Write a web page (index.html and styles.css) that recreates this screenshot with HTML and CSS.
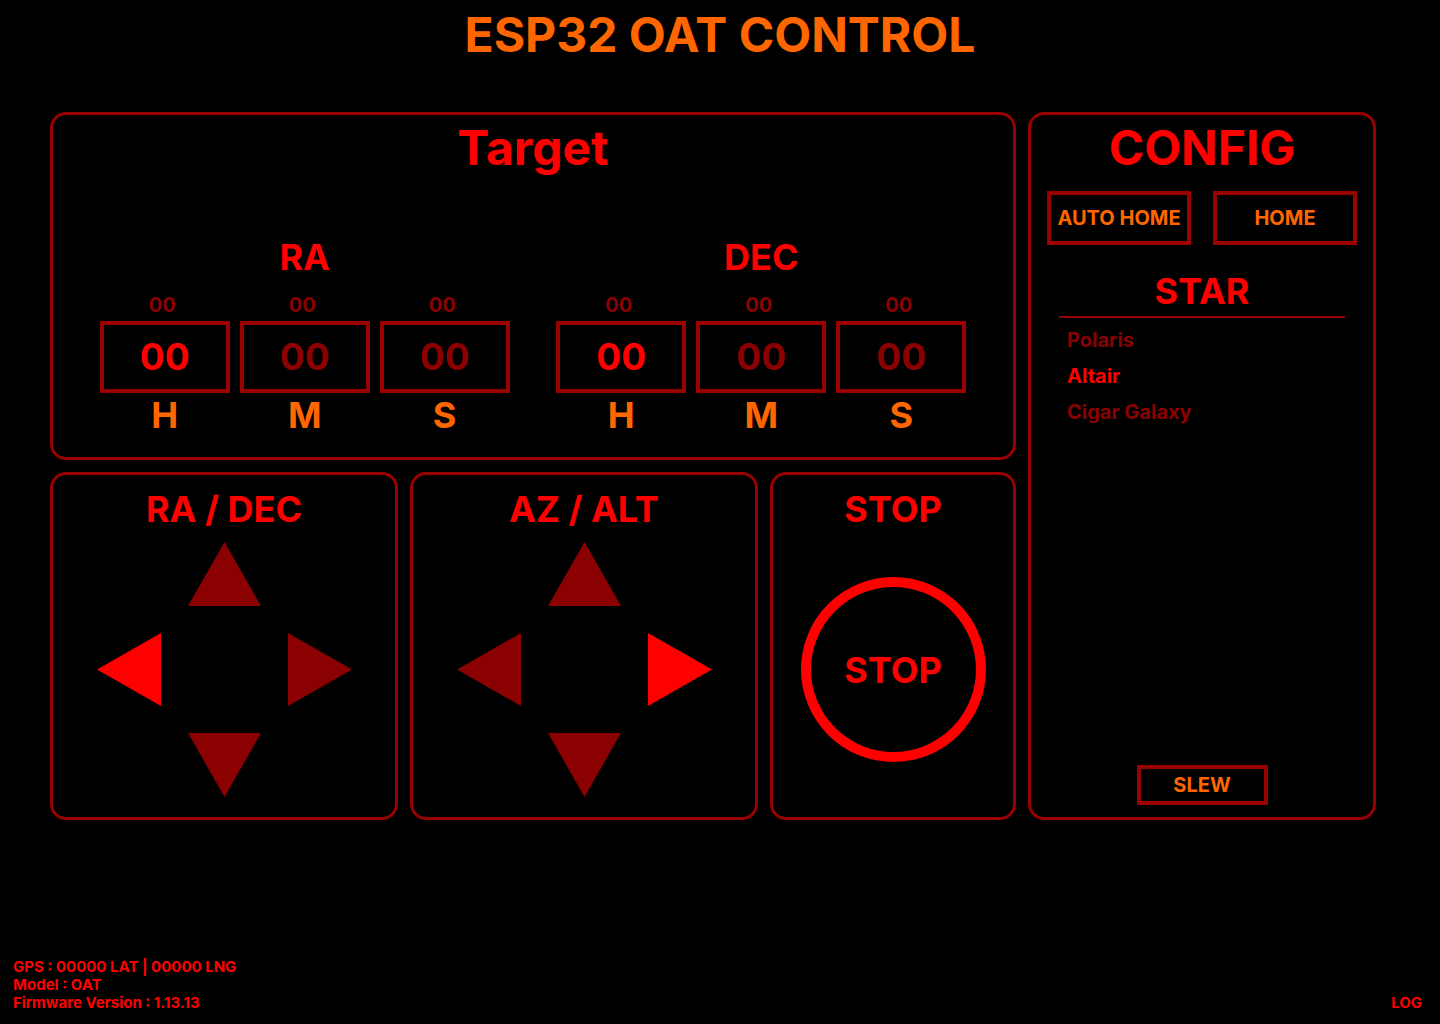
FILE: index.html
```html
<!DOCTYPE html>
<html lang="en">
<head>
<meta charset="utf-8">
<title>ESP32 OAT CONTROL</title>
<link rel="stylesheet" href="styles.css">
</head>
<body>
<header class="header">
  <h1 class="app-title">ESP32 OAT CONTROL</h1>
</header>
<main class="main">
  <div class="left-col">
    <section class="panel target">
      <h2 class="panel-title big">Target</h2>
      <div class="coords">
        <div class="coord-group">
          <div class="group-label">RA</div>
          <div class="fields">
            <div class="field"><div class="field-hint">00</div><div class="field-box active">00</div><div class="field-unit">H</div></div>
            <div class="field"><div class="field-hint">00</div><div class="field-box">00</div><div class="field-unit">M</div></div>
            <div class="field"><div class="field-hint">00</div><div class="field-box">00</div><div class="field-unit">S</div></div>
          </div>
        </div>
        <div class="coord-group">
          <div class="group-label">DEC</div>
          <div class="fields">
            <div class="field"><div class="field-hint">00</div><div class="field-box active">00</div><div class="field-unit">H</div></div>
            <div class="field"><div class="field-hint">00</div><div class="field-box">00</div><div class="field-unit">M</div></div>
            <div class="field"><div class="field-hint">00</div><div class="field-box">00</div><div class="field-unit">S</div></div>
          </div>
        </div>
      </div>
    </section>
    <div class="controls">
      <section class="panel pad-panel">
        <h2 class="panel-title">RA / DEC</h2>
        <div class="dpad">
          <svg class="arrow up" viewBox="0 0 73 64"><polygon points="36.5,0 73,64 0,64"/></svg>
          <svg class="arrow left on" viewBox="0 0 64 73"><polygon points="0,36.5 64,0 64,73"/></svg>
          <svg class="arrow right" viewBox="0 0 64 73"><polygon points="64,36.5 0,0 0,73"/></svg>
          <svg class="arrow down" viewBox="0 0 73 64"><polygon points="0,0 73,0 36.5,64"/></svg>
        </div>
      </section>
      <section class="panel pad-panel">
        <h2 class="panel-title">AZ / ALT</h2>
        <div class="dpad">
          <svg class="arrow up" viewBox="0 0 73 64"><polygon points="36.5,0 73,64 0,64"/></svg>
          <svg class="arrow left" viewBox="0 0 64 73"><polygon points="0,36.5 64,0 64,73"/></svg>
          <svg class="arrow right on" viewBox="0 0 64 73"><polygon points="64,36.5 0,0 0,73"/></svg>
          <svg class="arrow down" viewBox="0 0 73 64"><polygon points="0,0 73,0 36.5,64"/></svg>
        </div>
      </section>
      <section class="panel stop-panel">
        <h2 class="panel-title">STOP</h2>
        <div class="stop-btn">STOP</div>
      </section>
    </div>
  </div>
  <aside class="panel config">
    <h2 class="panel-title big">CONFIG</h2>
    <div class="config-buttons">
      <div class="btn">AUTO HOME</div>
      <div class="btn">HOME</div>
    </div>
    <h3 class="star-title">STAR</h3>
    <ul class="star-list">
      <li class="star">Polaris</li>
      <li class="star selected">Altair</li>
      <li class="star">Cigar Galaxy</li>
    </ul>
    <div class="btn slew">SLEW</div>
  </aside>
</main>
<footer class="footer">
  <div class="info">
    <div>GPS : 00000 LAT | 00000 LNG</div>
    <div>Model : OAT</div>
    <div>Firmware Version : 1.13.13</div>
  </div>
  <div class="log">LOG</div>
</footer>
</body>
</html>
```

FILE: styles.css
```css
* { box-sizing: border-box; }

html, body {
  margin: 0;
  padding: 0;
  background: #000;
}

body {
  width: 1440px;
  height: 1024px;
  display: flex;
  flex-direction: column;
  font-family: Inter, "Noto Sans", sans-serif;
  font-weight: 700;
  color: #ff0000;
  overflow: hidden;
}

.header {
  height: 64px;
  padding-top: 6px;
}

.app-title {
  margin: 0;
  text-align: center;
  font-size: 48px;
  line-height: 58px;
  font-weight: 700;
  color: #ff6600;
}

.main {
  margin-top: 48px;
  padding-left: 50px;
  display: flex;
  gap: 12px;
  height: 708px;
}

.left-col {
  width: 966px;
  display: flex;
  flex-direction: column;
  gap: 12px;
}

.panel {
  border: 3px solid #990000;
  border-radius: 16px;
  display: flex;
  flex-direction: column;
  align-items: center;
}

.panel-title {
  margin: 0;
  font-size: 36px;
  line-height: 44px;
  font-weight: 700;
  color: #ff0000;
  text-align: center;
}

.panel-title.big {
  font-size: 48px;
  line-height: 58px;
}

/* Target */
.target {
  height: 348px;
  padding-top: 4px;
}

.coords {
  margin-top: 58px;
  width: 100%;
  display: flex;
  justify-content: space-evenly;
}

.coord-group {
  display: flex;
  flex-direction: column;
  align-items: center;
}

.group-label {
  font-size: 36px;
  line-height: 44px;
  color: #ff0000;
}

.fields {
  margin-top: 14px;
  display: flex;
  gap: 10px;
}

.field {
  width: 130px;
  display: flex;
  flex-direction: column;
  align-items: center;
}

.field-hint {
  font-size: 20px;
  line-height: 24px;
  color: #8b0000;
  margin-bottom: 4px;
  margin-right: 5px;
}

.field-box {
  width: 130px;
  height: 72px;
  border: 4px solid #990000;
  font-size: 37px;
  line-height: 64px;
  text-align: center;
  color: #8b0000;
}

.field-box.active {
  color: #ff0000;
}

.field-unit {
  font-size: 36px;
  line-height: 44px;
  color: #ff6600;
}

/* Controls */
.controls {
  display: flex;
  gap: 12px;
  height: 348px;
}

.pad-panel {
  width: 348px;
  padding-top: 12px;
}

.dpad {
  margin-top: 11px;
  display: grid;
  grid-template-columns: 64px 127px 64px;
  grid-template-rows: 64px 127px 64px;
}

.arrow {
  fill: #8b0000;
  display: block;
}

.arrow.on {
  fill: #ff0000;
}

.arrow.up, .arrow.down {
  width: 73px;
  height: 64px;
  grid-column: 2;
  justify-self: center;
}

.arrow.up { grid-row: 1; }
.arrow.down { grid-row: 3; }

.arrow.left, .arrow.right {
  width: 64px;
  height: 73px;
  grid-row: 2;
  align-self: center;
}

.arrow.left { grid-column: 1; }
.arrow.right { grid-column: 3; }

.stop-panel {
  width: 246px;
  padding-top: 12px;
}

.stop-btn {
  margin-top: 46px;
  width: 185px;
  height: 185px;
  border: 10px solid #ff0000;
  border-radius: 50%;
  display: flex;
  align-items: center;
  justify-content: center;
  font-size: 36px;
  line-height: 44px;
  color: #ff0000;
}

/* Config */
.config {
  width: 348px;
  height: 708px;
  padding: 4px 0 12px;
}

.config-buttons {
  margin-top: 14px;
  width: 100%;
  padding: 0 16px;
  display: flex;
  justify-content: space-between;
}

.btn {
  border: 4px solid #990000;
  color: #ff6600;
  font-size: 20px;
  display: flex;
  align-items: center;
  justify-content: center;
}

.config-buttons .btn {
  width: 144px;
  height: 54px;
}

.star-title {
  margin: 24px 28px 0;
  align-self: stretch;
  font-size: 36px;
  line-height: 44px;
  font-weight: 700;
  text-align: center;
  padding-bottom: 3px;
  border-bottom: 2px solid #990000;
}

.star-list {
  list-style: none;
  margin: 4px 28px 0;
  padding: 0 0 0 8px;
  align-self: stretch;
}

.star {
  font-size: 20px;
  line-height: 36px;
  color: #8b0000;
}

.star.selected {
  color: #ff0000;
}

.btn.slew {
  margin-top: auto;
  width: 131px;
  height: 40px;
}

/* Footer */
.footer {
  margin-top: auto;
  padding: 0 18px 12px 13px;
  display: flex;
  justify-content: space-between;
  align-items: flex-end;
  font-size: 15px;
  line-height: 18px;
  color: #ff0000;
}
```
